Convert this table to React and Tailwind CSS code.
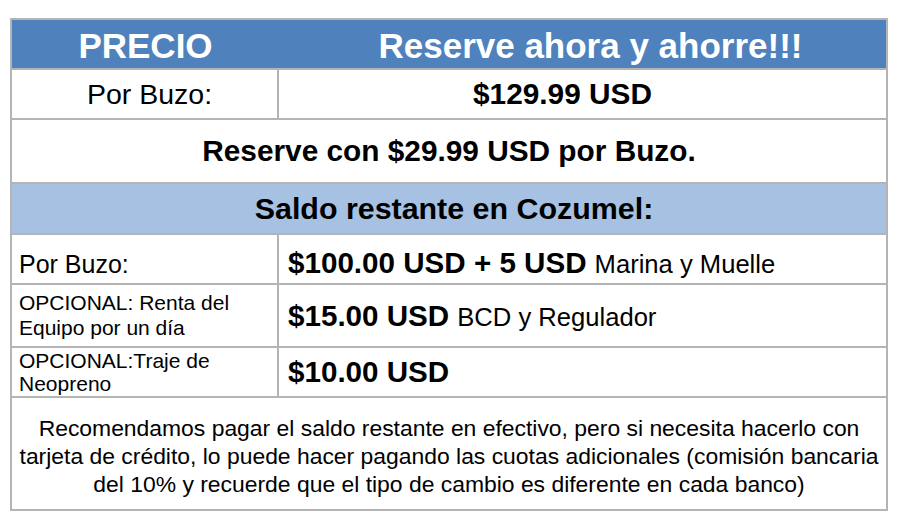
const font = { fontFamily: '"Liberation Sans", Arial, sans-serif' };

const App = () => {
  return (
    <div className="w-[900px] h-[527px] bg-white pt-[18px] pl-[10px]" style={font}>
      <div className="w-[878px] grid grid-cols-[265px_607px] gap-[2px] p-[2px] bg-[#b4b4b4] text-black">
        {/* Header */}
        <div className="col-span-2 h-[48px] bg-[#4f81bd] grid grid-cols-[265px_609px] text-white font-bold text-[35px]">
          <div className="flex items-center justify-center pl-[2px] pb-[1px]">PRECIO</div>
          <div className="flex items-center justify-center pl-[18px] pb-[1px]">Reserve ahora y ahorre!!!</div>
        </div>

        <div className="h-[48px] bg-white flex items-center justify-center pl-[10px] text-[28.5px]">Por Buzo:</div>
        <div className="h-[48px] bg-white flex items-center justify-center pr-[40px] text-[29.8px] font-bold">$129.99 USD</div>

        <div className="col-span-2 h-[62px] bg-white flex items-center justify-center text-[29.8px] font-bold">
          Reserve con $29.99 USD por Buzo.
        </div>

        <div className="col-span-2 h-[49px] bg-[#a7c1e2] flex items-center justify-center pl-[10px] text-[30.4px] font-bold">
          Saldo restante en Cozumel:
        </div>

        <div className="h-[48px] bg-white flex items-center pl-[7px] pt-[12px] text-[25px]">Por Buzo:</div>
        <div className="h-[48px] bg-white flex items-baseline pl-[9px] pt-[6px] gap-[8px]">
          <span className="text-[29.6px] font-bold">$100.00 USD + 5 USD</span>
          <span className="text-[25.6px]">Marina y Muelle</span>
        </div>

        <div className="h-[61px] bg-white flex flex-col justify-center pl-[7px] pb-[2px] text-[21px] leading-[25px]">
          <span>OPCIONAL: Renta del</span>
          <span>Equipo por un día</span>
        </div>
        <div className="h-[61px] bg-white flex items-baseline pl-[9px] pt-[9px] gap-[8px]">
          <span className="text-[29.6px] font-bold">$15.00 USD</span>
          <span className="text-[25.6px]">BCD y Regulador</span>
        </div>

        <div className="h-[48px] bg-white flex flex-col justify-center pl-[7px] text-[21px] leading-[23px]">
          <span>OPCIONAL:Traje de</span>
          <span>Neopreno</span>
        </div>
        <div className="h-[48px] bg-white flex items-center pl-[9px]">
          <span className="text-[29.6px] font-bold">$10.00 USD</span>
        </div>

        <div className="col-span-2 h-[111px] bg-white flex flex-col items-center justify-center pt-[4px] text-[22.9px] leading-[28px] text-center">
          <span>Recomendamos pagar el saldo restante en efectivo, pero si necesita hacerlo con</span>
          <span>tarjeta de crédito, lo puede hacer pagando las cuotas adicionales (comisión bancaria</span>
          <span>del 10% y recuerde que el tipo de cambio es diferente en cada banco)</span>
        </div>
      </div>
    </div>
  );
};

export default App;
